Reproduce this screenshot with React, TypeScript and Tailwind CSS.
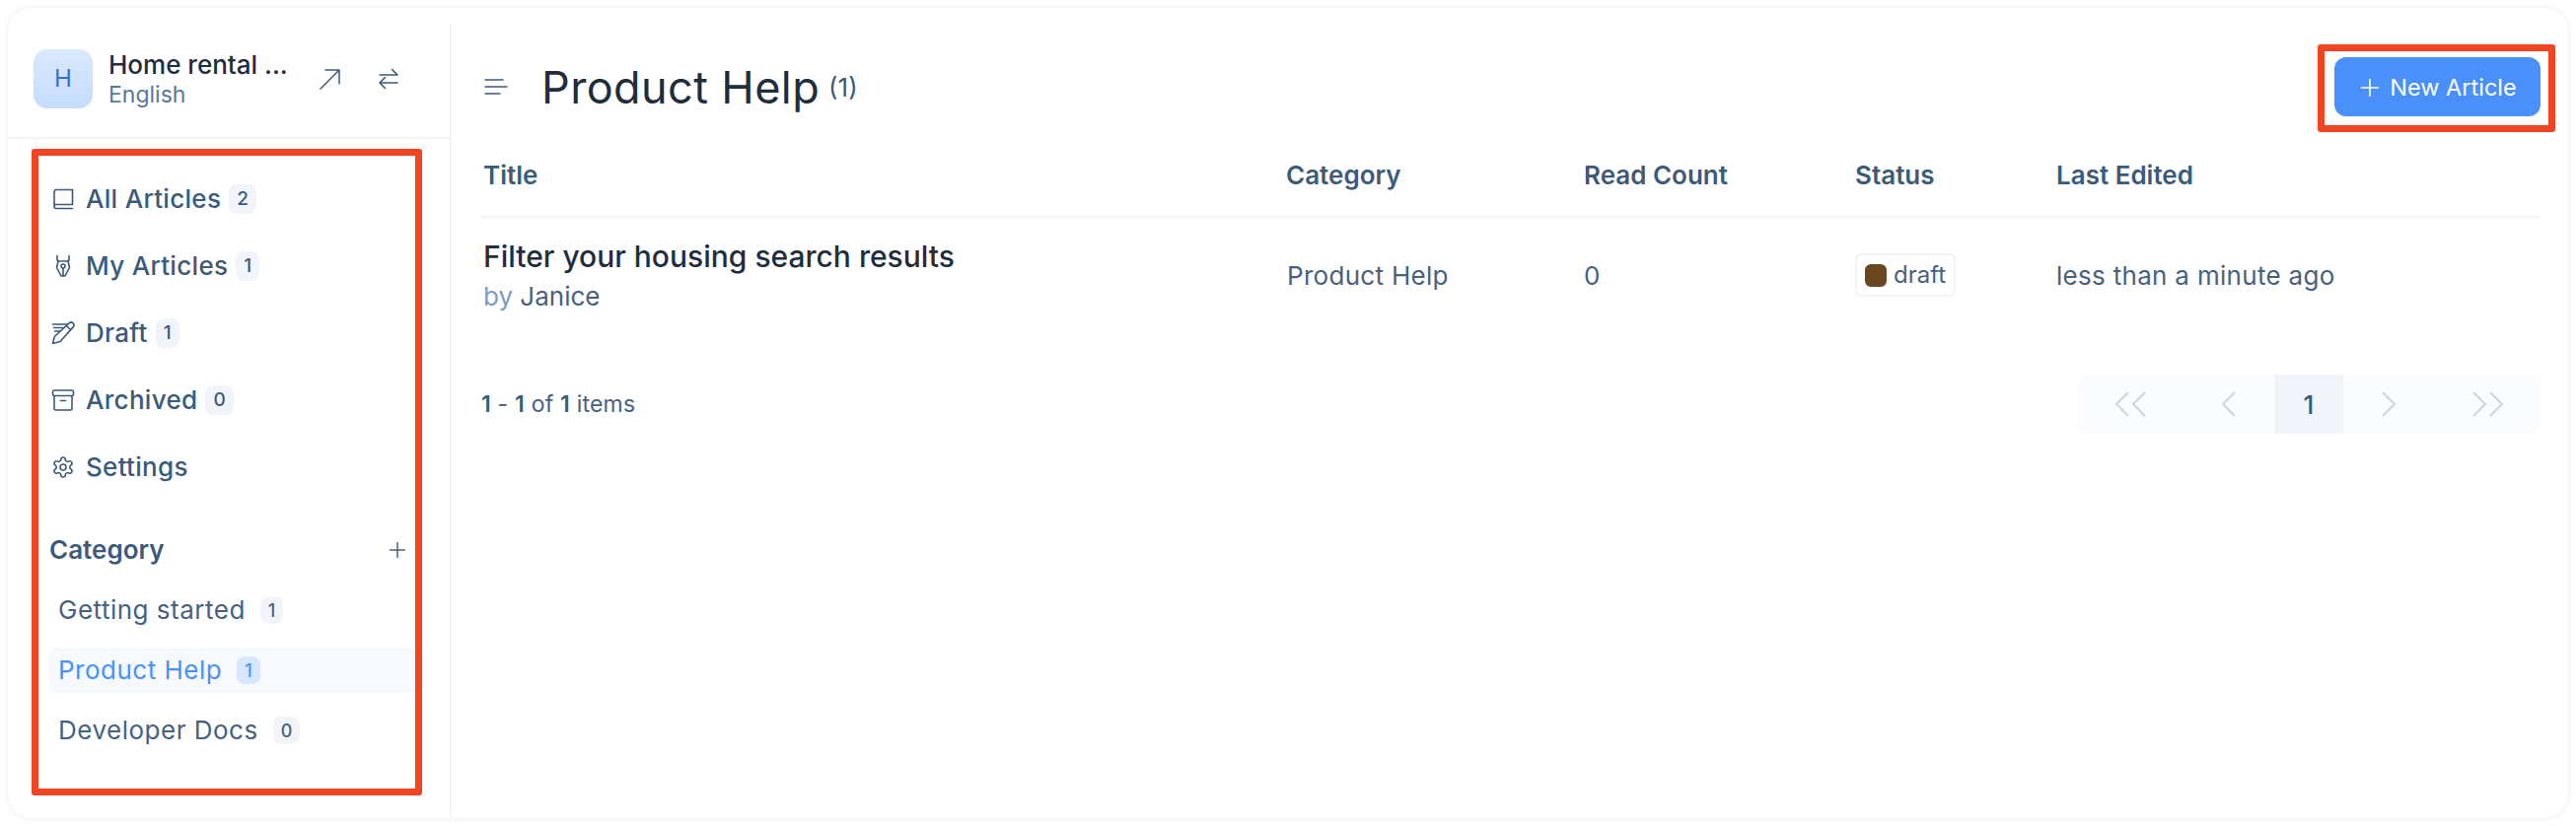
import React from "react";

const font = { fontFamily: "Inter, 'Liberation Sans', sans-serif" };

function Svg({ size, children, color = "#3c5a7a", sw = 2 }: { size: number; children: React.ReactNode; color?: string; sw?: number }) {
  return (
    <svg width={size} height={size} viewBox="0 0 24 24" fill="none" stroke={color} strokeWidth={sw} strokeLinecap="round" strokeLinejoin="round">
      {children}
    </svg>
  );
}

const BookI = () => (
  <Svg size={24} sw={1.6}>
    <path d="M3 19V4.5A2 2 0 0 1 5 2.5h16.5v15H5a2 2 0 0 0-2 2v0a2 2 0 0 0 2 2h16.5" />
  </Svg>
);
const NibI = () => (
  <Svg size={24} sw={1.6}>
    <path d="M6 1.5v4.5L7.5 7h9L18 6V1.5" />
    <path d="M7 7 5.5 13.5 10 22h4l4.5-8.500L17 7" />
    <circle cx="12" cy="12" r="2" />
    <path d="M12 14v8" />
  </Svg>
);
const DraftI = () => (
  <Svg size={24} sw={1.6}>
    <path d="M1.500 3h15M2.500 6.500h9.500M3.500 10h5" />
    <path d="M18 1.800a2.900 2.900 0 0 1 4.100 4.100L9 20.500l-7.500 2 1.800-7z" />
    <path d="M15.500 4.500l4 4" />
  </Svg>
);
const ArchiveI = () => (
  <Svg size={24} sw={1.6}>
    <rect x="1.500" y="2" width="21" height="5.500" rx="1.500" />
    <path d="M3 7.500V20.500a1.500 1.500 0 0 0 1.500 1.500h15a1.500 1.500 0 0 0 1.500-1.500V7.500" />
    <path d="M9.500 12.500h5" />
  </Svg>
);
const GearI = () => (
  <Svg size={24} sw={1.6}>
    <path d="M12.220 2h-.44a2 2 0 0 0-2 2v.18a2 2 0 0 1-1 1.730l-.43.25a2 2 0 0 1-2 0l-.15-.08a2 2 0 0 0-2.730.73l-.22.38a2 2 0 0 0 .73 2.730l.15.1a2 2 0 0 1 1 1.720v.51a2 2 0 0 1-1 1.740l-.15.09a2 2 0 0 0-.73 2.730l.22.38a2 2 0 0 0 2.730.73l.15-.08a2 2 0 0 1 2 0l.43.25a2 2 0 0 1 1 1.730V20a2 2 0 0 0 2 2h.44a2 2 0 0 0 2-2v-.18a2 2 0 0 1 1-1.730l.43-.25a2 2 0 0 1 2 0l.15.08a2 2 0 0 0 2.730-.73l.22-.39a2 2 0 0 0-.73-2.730l-.15-.08a2 2 0 0 1-1-1.740v-.5a2 2 0 0 1 1-1.740l.15-.09a2 2 0 0 0 .73-2.730l-.22-.38a2 2 0 0 0-2.730-.73l-.15.08a2 2 0 0 1-2 0l-.43-.25a2 2 0 0 1-1-1.730V4a2 2 0 0 0-2-2z" />
    <circle cx="12" cy="12" r="3" />
  </Svg>
);

function NavItem({ icon, label, count }: { icon: React.ReactNode; label: string; count: string }) {
  return (
    <div className="flex h-[68px] items-center pl-[44px]">
      <span className="flex w-[35px] shrink-0 items-center">{icon}</span>
      <span className="text-[26px] font-[450] leading-none tracking-[0.3px] text-[#3c5a7a]">{label}</span>
      {count && (
        <span className="ml-[8px] flex h-[30px] items-center rounded-[8px] bg-[#f1f5f9] px-[8px] text-[19px] font-medium text-[#3c5a7a]">{count}</span>
      )}
    </div>
  );
}

function CatItem({ label, count, active }: { label: string; count: string; active?: boolean }) {
  return (
    <div className={"ml-[41px] mr-[30px] flex h-[46px] items-center rounded-[8px] pl-[10px] " + (active ? "bg-[#f6faff]" : "")}>
      <span className={"text-[26px] leading-none tracking-[0.5px] " + (active ? "text-[#4a90fb]" : "text-[#47617f]")}>{label}</span>
      <span className={"ml-[15px] flex h-[28px] items-center rounded-[8px] px-[8px] text-[18px] font-medium " + (active ? "bg-[#d6e7ff] text-[#4a90fb]" : "bg-[#f1f5f9] text-[#47617f]")}>{count}</span>
    </div>
  );
}

const gridCols = "grid grid-cols-[814px_302px_275px_204px_1fr]";

export default function App() {
  return (
    <div style={font} className="relative h-[838px] w-[2612px] overflow-hidden bg-white p-[8px] [font-optical-sizing:none]">
      <div className="flex h-[822px] w-[2596px] rounded-[24px] bg-white shadow-[0_0_6px_rgba(15,40,70,0.09)]">
        {/* Sidebar */}
        <aside className="mt-[16px] h-[806px] w-[450px] shrink-0 border-r-2 border-[#f2f5f9]">
          <div className="flex h-[117px] items-center border-b-2 border-[#f2f5f9] pb-[4px] pl-[26px]">
            <div className="flex h-[60px] w-[60px] shrink-0 items-center justify-center rounded-[14px] bg-gradient-to-b from-[#d9e9ff] to-[#c5dcfd] text-[24px] text-[#2f74d0]">H</div>
            <div className="ml-[16px] w-[204px] shrink-0">
              <div className="whitespace-nowrap text-[26px] font-[450] leading-[32px] text-[#1f2d3d]">Home rental ...</div>
              <div className="text-[23px] leading-[28px] text-[#5a7799]">English</div>
            </div>
            <svg width="24" height="24" viewBox="0 0 24 24" fill="none" stroke="#3c5a7a" strokeWidth="1.5" strokeLinecap="round" strokeLinejoin="round" className="ml-[8px] shrink-0">
              <path d="M3 22L22 3M8 3h14v14" />
            </svg>
            <svg width="24" height="24" viewBox="0 0 24 24" fill="none" stroke="#3c5a7a" strokeWidth="1.6" strokeLinecap="round" strokeLinejoin="round" className="ml-[36px] shrink-0">
              <path d="M3 8h18M15.500 2.500 21 8M3 16h18M8.500 10.500 3 16 8.500 21.500" />
            </svg>
          </div>
          <div className="pt-[27px]">
            <NavItem icon={<BookI />} label="All Articles" count="2" />
            <NavItem icon={<NibI />} label="My Articles" count="1" />
            <NavItem icon={<DraftI />} label="Draft" count="1" />
            <NavItem icon={<ArchiveI />} label="Archived" count="0" />
            <NavItem icon={<GearI />} label="Settings" count="" />
          </div>
          <div className="mt-[32px] flex h-[36px] items-center justify-between pl-[42px] pr-[44px]">
            <span className="text-[26px] font-semibold leading-none text-[#3c5a7a]">Category</span>
            <svg width="18" height="18" viewBox="0 0 18 18" fill="none" stroke="#47617f" strokeWidth="1.5"><path d="M9 1v16M1 9h16" /></svg>
          </div>
          <div className="mt-[20px] flex flex-col gap-[15px]">
            <CatItem label="Getting started" count="1" />
            <CatItem label="Product Help" count="1" active />
            <CatItem label="Developer Docs" count="0" />
          </div>
        </aside>
        {/* Main */}
        <main className="flex-1 pl-[30px] pr-[28px] pt-[50px]">
          <div className="flex h-[60px] items-center">
            <svg width="24" height="20" viewBox="0 0 24 20" fill="none" stroke="#3c5a7a" strokeWidth="1.5" strokeLinecap="round" className="ml-[3px] shrink-0">
              <path d="M1 3h18M1 10h22M1 17h15" />
            </svg>
            <h1 className="ml-[34px] text-[45px] font-normal leading-none tracking-[0.4px] text-[#1f2d3d]">Product Help</h1>
            <span className="ml-[9px] text-[26px] text-[#3c5a7a]">(1)</span>
            <button className="ml-auto flex h-[60px] w-[209px] items-center justify-center gap-[10px] rounded-[12px] bg-[#4a90fb] pl-[2px] pt-[1px] text-[23.5px] font-normal text-white">
              <svg width="20" height="20" viewBox="0 0 20 20" fill="none" stroke="white" strokeWidth="1.6"><path d="M10 1v18M1 10h18" /></svg>
              New Article
            </button>
          </div>
          <div className={gridCols + " h-[103px] items-start border-b-2 border-[#f0f3f7] pl-[2px] pt-[46px] text-[26px] font-semibold leading-[28px] text-[#3c5a7a]"}>
            <span>Title</span>
            <span>Category</span>
            <span>Read Count</span>
            <span>Status</span>
            <span>Last Edited</span>
          </div>
          <div className={gridCols + " h-[116px] items-center pl-[2px] text-[26px] tracking-[0.3px] text-[#47617f]"}>
            <div className="-mt-[1px]">
              <div className="whitespace-nowrap text-[30px] font-[450] leading-[38px] tracking-normal text-[#1f2d3d]">Filter your housing search results</div>
              <div className="mt-[7px] text-[26px] leading-[30px] tracking-normal text-[#7f9cc0]">by <span className="text-[#47617f]">Janice</span></div>
            </div>
            <span className="pl-[1px]">Product Help</span>
            <span>0</span>
            <span className="flex">
              <span className="flex h-[44px] items-center gap-[7px] rounded-[6px] border-2 border-[#f0f3f7] px-[8px] text-[24px] leading-none tracking-normal text-[#47617f]">
                <span className="h-[23px] w-[22px] rounded-[6px] bg-[#6b4720]" />
                draft
              </span>
            </span>
            <span>less than a minute ago</span>
          </div>
          <div className="mt-[43px] flex h-[60px] items-center justify-between">
            <div className="text-[23px] tracking-[0.2px] text-[#47617f]">
              <b className="font-semibold text-[#3c5a7a]">1</b> - <b className="font-semibold text-[#3c5a7a]">1</b> of <b className="font-semibold text-[#3c5a7a]">1</b> items
            </div>
            <div className="flex h-[60px] w-[470px] rounded-[10px] bg-[#fbfcfd]">
              <span className="flex w-[107px] items-center justify-center">
                <svg width="32" height="26" viewBox="0 0 32 26" fill="none" stroke="#ccd5df" strokeWidth="2"><path d="M14 1 2 13l12 12M31 1 19 13l12 12" /></svg>
              </span>
              <span className="flex w-[93px] items-center justify-center">
                <svg width="15" height="26" viewBox="0 0 15 26" fill="none" stroke="#ccd5df" strokeWidth="2"><path d="M14 1 2 13l12 12" /></svg>
              </span>
              <span className="flex w-[70px] items-center justify-center bg-[#f1f5f9] text-[26px] font-medium text-[#3c5a7a]">1</span>
              <span className="flex w-[93px] items-center justify-center">
                <svg width="15" height="26" viewBox="0 0 15 26" fill="none" stroke="#ccd5df" strokeWidth="2"><path d="M1 1l12 12L1 25" /></svg>
              </span>
              <span className="flex w-[107px] items-center justify-center">
                <svg width="32" height="26" viewBox="0 0 32 26" fill="none" stroke="#ccd5df" strokeWidth="2"><path d="M1 1l12 12L1 25M18 1l12 12-12 12" /></svg>
              </span>
            </div>
          </div>
        </main>
      </div>
      {/* Annotation boxes */}
      <div className="absolute left-[32px] top-[151px] h-[656px] w-[396px] rounded-[3px] border-[7px] border-[#f04423]" />
      <div className="absolute left-[2350px] top-[45px] h-[89px] w-[241px] rounded-[3px] border-[7px] border-[#f04423]" />
    </div>
  );
}
